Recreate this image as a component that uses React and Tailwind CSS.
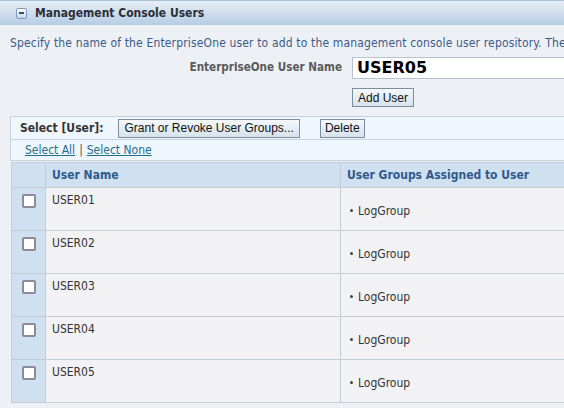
import React from 'react';

const users = ['USER01', 'USER02', 'USER03', 'USER04', 'USER05'];

const btn =
  "h-[19px] px-[4px] border border-[#7d8d9c] bg-gradient-to-b from-[#f4f8fb] to-[#d6e2ec] text-[12px] leading-none text-[#111] font-['Liberation_Sans',Arial,sans-serif] flex items-center";

export default function App() {
  return (
    <div className="w-[564px] h-[408px] overflow-hidden bg-[#edf1f6] font-['DejaVu_Sans_Condensed','DejaVu_Sans',sans-serif]">
      <div className="w-[760px]">
        {/* title bar */}
        <div className="h-[25px] border-t border-[#a9bdd6] bg-gradient-to-b from-[#e6eef6] to-[#b7cce3] flex items-center pl-[16px] gap-[8px]">
          <span className="w-[11px] h-[11px] border border-[#7d9bc1] rounded-[2px] bg-gradient-to-b from-white to-[#c4d6ea] flex items-center justify-center">
            <span className="w-[5px] h-[2px] bg-[#3d4a5a]" />
          </span>
          <span className="text-[12px] font-bold text-[#2b2f36]">Management Console Users</span>
        </div>

        <p className="mt-[9px] pl-[10px] text-[12px] tracking-[0.15px] text-[#3c5a86] whitespace-nowrap">
          Specify the name of the EnterpriseOne user to add to the management console user repository. The user must exist in EnterpriseOne.
        </p>

        {/* add user form */}
        <div className="mt-[5px] flex items-center">
          <span className="w-[342px] text-right text-[11.6px] font-bold text-[#5a5a5a]">EnterpriseOne User Name</span>
          <div className="ml-[10px] w-[300px] h-[22px] bg-white border border-[#b9c3cd] flex items-center pl-[4px]">
            <span className="text-[16px] font-bold text-black font-['DejaVu_Sans',sans-serif]">USER05</span>
          </div>
        </div>
        <div className="mt-[9px] pl-[352px]">
          <button className={btn + ' text-[#000] px-[5px]'}>Add User</button>
        </div>

        {/* toolbar */}
        <div className="mt-[9px] ml-[10px] border-l border-t border-b border-[#c6d1dd] bg-[#eff6fd]">
          <div className="h-[22px] flex items-center pl-[9px]">
            <span className="text-[12px] font-bold text-[#333]">Select [User]:</span>
            <button className={btn + ' ml-[15px] px-[5px]'}>Grant or Revoke User Groups...</button>
            <button className={btn + ' ml-[20px]'}>Delete</button>
          </div>
          <div className="h-[21px] border-t border-[#c6d1dd] flex items-center pl-[14px] text-[12px] text-[#555]">
            <a className="text-[#1f6f8e] underline">Select All</a>
            <span className="mx-[4px]">|</span>
            <a className="text-[#1f6f8e] underline">Select None</a>
          </div>
        </div>

        {/* table */}
        <div className="mt-[1px] ml-[11px] border-t border-l border-[#c6ccd6]">
          <div className="h-[25px] flex bg-[#cfe0f0] border-b border-[#c6ccd6]">
            <div className="w-[34px] border-r border-[#c6ccd6]" />
            <div className="w-[295px] border-r border-[#c6ccd6] pl-[6px] flex items-center text-[12px] font-bold text-[#2f5b8e]">User Name</div>
            <div className="flex-1 pl-[6px] flex items-center text-[12px] font-bold text-[#2f5b8e]">User Groups Assigned to User</div>
          </div>
          {users.map((u) => (
            <div key={u} className="h-[43px] flex border-b border-[#c6ccd6]">
              <div className="w-[34px] bg-[#cfe0f0] border-r border-[#c6ccd6] pt-[6px] pl-[10px]">
                <span className="block w-[14px] h-[14px] rounded-[2px] border-2 border-[#8b8b99] bg-white" />
              </div>
              <div className="w-[295px] bg-[#f2f2f4] border-r border-[#c6ccd6] pl-[6px] pt-[3px] text-[12px] text-[#333]">{u}</div>
              <div className="flex-1 bg-[#f2f2f4] pl-[9px] flex items-center pt-[3px] text-[12px] text-[#333]">
                <span className="w-[3px] h-[3px] rounded-full bg-[#444] mr-[5px]" />
                LogGroup
              </div>
            </div>
          ))}
        </div>
      </div>
    </div>
  );
}
